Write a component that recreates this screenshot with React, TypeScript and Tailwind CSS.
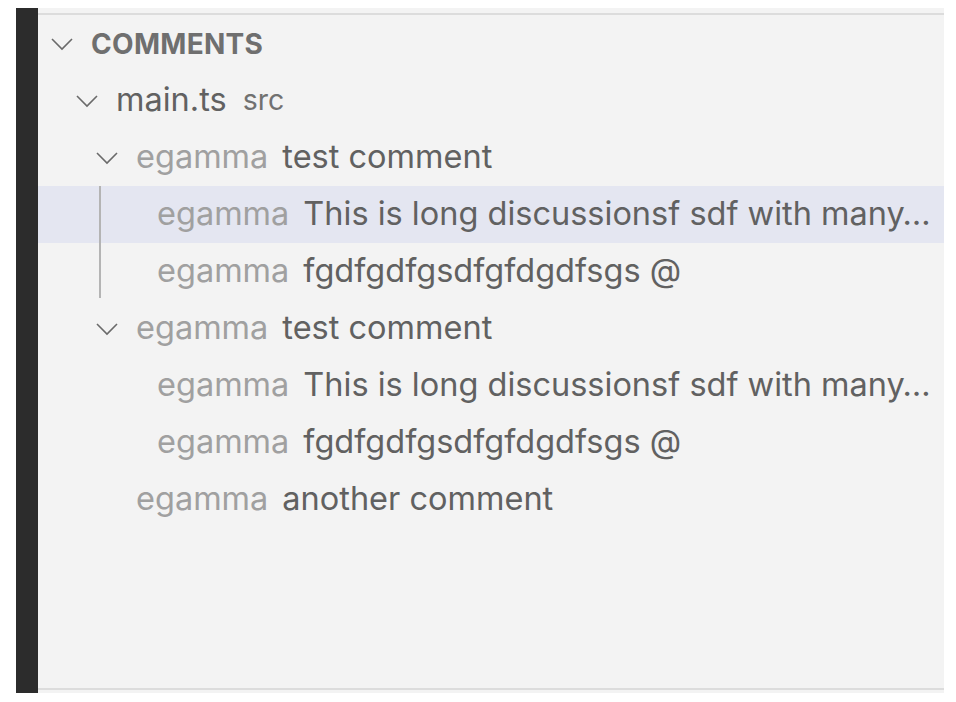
import React from "react";

const Chevron = ({ className = "" }: { className?: string }) => (
  <svg width="24" height="14" viewBox="0 0 24 14" className={className} fill="none">
    <path d="M2 2 L12 12 L22 2" stroke="#6a6a6a" strokeWidth="1.6" />
  </svg>
);

const font = { fontFamily: "Inter, 'Noto Sans', sans-serif" };

function Row({
  pl,
  chevron,
  highlight,
  children,
}: {
  pl: string;
  chevron?: boolean;
  highlight?: boolean;
  children: React.ReactNode;
}) {
  return (
    <div className={`flex h-[57px] items-center whitespace-nowrap ${pl} ${highlight ? "bg-[#e4e6f1]" : ""}`}>
      {chevron && <Chevron className="mr-[17px] shrink-0" />}
      {children}
    </div>
  );
}

export default function App() {
  return (
    <div className="h-[702px] w-[956px] bg-white pt-[8px]" style={font}>
      <div className="ml-[16px] flex h-[685px] w-[928px]">
        <div className="w-[22px] shrink-0 bg-[#2c2c2c]" />
        <div className="flex flex-1 flex-col bg-[#f3f3f3] pt-[5px] pb-[3px]">
          <div className="h-[2px] bg-[#dcdcdc]" />
          <div className="relative flex-1 overflow-hidden text-[32.5px] text-[#616161]">
            <Row pl="pl-[12px]" chevron>
              <span className="pt-[1px] text-[28px] font-bold tracking-[0.3px] text-[#6f6f6f]">COMMENTS</span>
            </Row>
            <Row pl="pl-[37px]" chevron>
              <span>main.ts</span>
              <span className="ml-[16px] text-[28.5px] text-[#717171]">src</span>
            </Row>
            <Row pl="pl-[57px]" chevron>
              <span className="text-[#a0a0a0]">egamma</span>
              <span className="ml-[14px]">test comment</span>
            </Row>
            <div className="relative">
              <div className="absolute left-[61px] top-0 h-[112px] w-[2px] bg-[#b4b4b4]" />
              <Row pl="pl-[119px]" highlight>
                <span className="text-[#a0a0a0]">egamma</span>
                <span className="ml-[14px]">This is long discussionsf sdf with many…</span>
              </Row>
              <Row pl="pl-[119px]">
                <span className="text-[#a0a0a0]">egamma</span>
                <span className="ml-[14px]">fgdfgdfgsdfgfdgdfsgs @</span>
              </Row>
            </div>
            <Row pl="pl-[57px]" chevron>
              <span className="text-[#a0a0a0]">egamma</span>
              <span className="ml-[14px]">test comment</span>
            </Row>
            <Row pl="pl-[119px]">
              <span className="text-[#a0a0a0]">egamma</span>
              <span className="ml-[14px]">This is long discussionsf sdf with many…</span>
            </Row>
            <Row pl="pl-[119px]">
              <span className="text-[#a0a0a0]">egamma</span>
              <span className="ml-[14px]">fgdfgdfgsdfgfdgdfsgs @</span>
            </Row>
            <Row pl="pl-[98px]">
              <span className="text-[#a0a0a0]">egamma</span>
              <span className="ml-[14px]">another comment</span>
            </Row>
          </div>
          <div className="h-[2px] bg-[#dcdcdc]" />
        </div>
      </div>
    </div>
  );
}
